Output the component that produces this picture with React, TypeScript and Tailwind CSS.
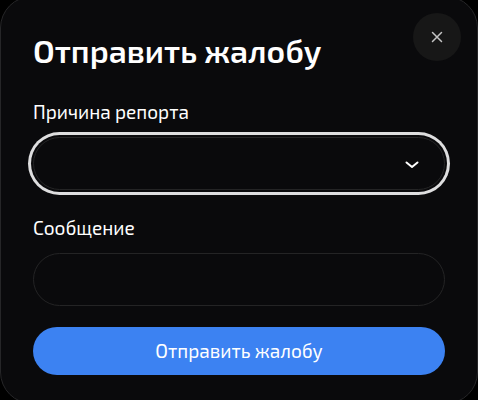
import React from "react";

const fieldClass =
  "h-[53px] w-full appearance-none rounded-full border border-[#242425] bg-[#0a0a0c] px-6 text-lg text-white outline-none";

function ChevronIcon() {
  return (
    <svg
      className="pointer-events-none absolute top-1/2 right-6 size-[18px] -translate-y-1/2"
      viewBox="0 0 18 18"
      fill="none"
      stroke="white"
      strokeWidth="2"
      strokeLinecap="round"
      strokeLinejoin="round"
      aria-hidden="true"
    >
      <path d="M3.5 7.5 9 12l5.5-4.5" />
    </svg>
  );
}

function CloseIcon() {
  return (
    <svg
      className="size-4"
      viewBox="0 0 16 16"
      fill="none"
      stroke="#c4c4c4"
      strokeWidth="1.5"
      strokeLinecap="round"
      aria-hidden="true"
    >
      <path d="m3.5 3.5 9 9m0-9-9 9" />
    </svg>
  );
}

export default function App() {
  return (
    <main className="overflow-hidden bg-black font-['Exo_2','Noto_Sans',sans-serif] text-white">
      <section
        role="dialog"
        aria-labelledby="report-title"
        className="relative -my-1 rounded-[32px] border border-[#262628] bg-[#0a0a0c] px-8 pt-[33px] pb-7"
      >
        <button
          type="button"
          aria-label="Закрыть"
          className="absolute top-4 right-4 flex size-12 items-center justify-center rounded-full bg-[#171717]"
        >
          <CloseIcon />
        </button>
        <h1 id="report-title" className="text-[32px] leading-10 font-semibold">
          Отправить жалобу
        </h1>
        <form className="mt-7" onSubmit={(event) => event.preventDefault()}>
          <label htmlFor="reason" className="block text-[19px] leading-7">
            Причина репорта
          </label>
          <div className="relative mt-[11px]">
            <select
              id="reason"
              defaultValue=""
              className={`${fieldClass} block ring-3 ring-[#dededf] ring-offset-2 ring-offset-[#0a0a0c]`}
            >
              <option value=""></option>
            </select>
            <ChevronIcon />
          </div>
          <label htmlFor="message" className="mt-6 block text-[19px] leading-7">
            Сообщение
          </label>
          <input id="message" type="text" className={`${fieldClass} mt-[11px] block`} />
          <button
            type="submit"
            className="mt-[21px] block h-12 w-full rounded-full bg-[#3c82f2] text-[19px]"
          >
            Отправить жалобу
          </button>
        </form>
      </section>
    </main>
  );
}
